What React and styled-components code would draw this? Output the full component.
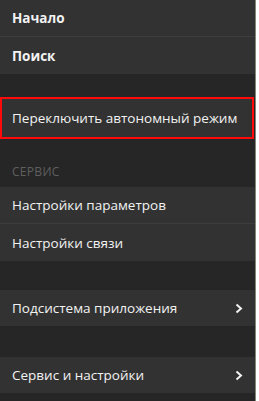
import styled, { createGlobalStyle } from 'styled-components';

const GlobalStyle = createGlobalStyle`
  html, body {
    margin: 0;
    padding: 0;
    background: #ffffff;
  }
  body {
    font-family: "Open Sans", "Noto Sans", sans-serif;
  }
`;

const Panel = styled.nav`
  width: 255px;
  height: 401px;
  background: #262626;
  border-right: 1px solid #85857a;
  overflow: hidden;
`;

const Group = styled.div`
  background: #323232;
`;

const Row = styled.div`
  display: flex;
  align-items: center;
  justify-content: space-between;
  height: ${(p) => p.$h || 36}px;
  padding: 0 12px 0 ${(p) => p.$pl || 12}px;
  color: #f2f2f2;
  font-size: 13.5px;
  font-weight: ${(p) => (p.$bold ? 700 : 400)};
  & + & {
    border-top: 1px solid #3d3d3d;
  }
`;

const Gap = styled.div`
  height: ${(p) => p.$h}px;
`;

const Highlight = styled.div`
  border: 2px solid #ff0a0a;
  margin-right: 1px;
  background: #323232;
`;

const SectionTitle = styled.div`
  height: 48px;
  display: flex;
  align-items: flex-end;
  padding: 0 0 7px 12px;
  box-sizing: border-box;
  color: #5f5f5f;
  font-size: 12px;
  letter-spacing: 0.3px;
`;

const Chevron = () => (
  <svg width="8" height="11" viewBox="0 0 8 11">
    <path d="M1.5 1.5 L6 5.5 L1.5 9.5" fill="none" stroke="#f2f2f2" strokeWidth="2" />
  </svg>
);

export default function App() {
  return (
    <>
      <GlobalStyle />
      <Panel>
        <Group>
          <Row $bold $h={36}>Начало</Row>
          <Row $bold $h={37}>Поиск</Row>
        </Group>
        <Gap $h={23} />
        <Highlight>
          <Row $h={38} $pl={10}>Переключить автономный режим</Row>
        </Highlight>
        <SectionTitle>СЕРВИС</SectionTitle>
        <Group>
          <Row>Настройки параметров</Row>
          <Row $h={37}>Настройки связи</Row>
        </Group>
        <Gap $h={29} />
        <Group>
          <Row>
            Подсистема приложения
            <Chevron />
          </Row>
        </Group>
        <Gap $h={31} />
        <Group>
          <Row>
            Сервис и настройки
            <Chevron />
          </Row>
        </Group>
      </Panel>
    </>
  );
}
